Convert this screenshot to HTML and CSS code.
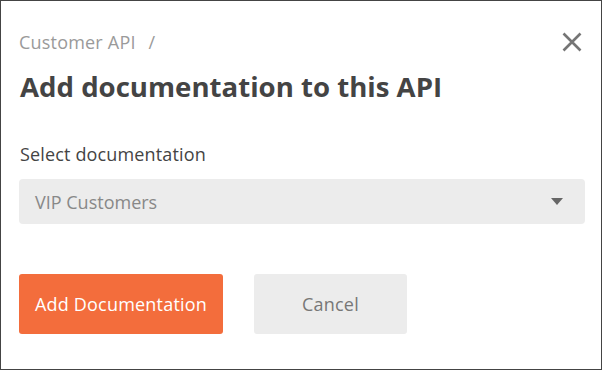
FILE: index.html
```html
<!DOCTYPE html>
<html>
<head>
<meta charset="utf-8">
<link rel="stylesheet" href="styles.css">
</head>
<body>
<div class="dialog">
  <div class="header">
    <div class="crumb">Customer API <span class="sep">/</span></div>
    <button class="close" aria-label="Close">
      <svg width="20" height="20" viewBox="0 0 20 20"><path d="M1.5 1.5 L18.5 18.5 M18.5 1.5 L1.5 18.5" stroke="#757575" stroke-width="2.6" fill="none"/></svg>
    </button>
  </div>
  <h1 class="title">Add documentation to this API</h1>
  <div class="field">
    <label class="label">Select documentation</label>
    <div class="select">
      <span class="value">VIP Customers</span>
      <span class="caret"></span>
    </div>
  </div>
  <div class="actions">
    <button class="btn primary">Add Documentation</button>
    <button class="btn secondary">Cancel</button>
  </div>
</div>
</body>
</html>
```
FILE: styles.css
```css
html, body {
  margin: 0;
  padding: 0;
}
body {
  font-family: "Open Sans", "Noto Sans", sans-serif;
  background: #fff;
}
.dialog {
  box-sizing: border-box;
  width: 602px;
  height: 370px;
  border: 1px solid #444;
  padding: 29px 19px 0 18px;
}
.header {
  display: flex;
  justify-content: space-between;
  align-items: flex-start;
}
.crumb {
  font-size: 18px;
  line-height: 24px;
  color: #9a9a9a;
  letter-spacing: 0.2px;
}
.sep {
  margin-left: 8px;
}
.close {
  border: 0;
  background: none;
  padding: 0;
  margin-top: 2px;
  width: 20px;
  height: 20px;
  cursor: pointer;
}
.close svg {
  display: block;
}
.title {
  margin: 14px 0 0 1px;
  font-size: 27.6px;
  line-height: 36px;
  font-weight: 700;
  color: #444;
}
.field {
  margin-top: 38px;
}
.label {
  display: block;
  margin-left: 1px;
  font-size: 18px;
  line-height: 24px;
  color: #444;
  letter-spacing: 0.15px;
}
.select {
  margin-top: 13px;
  width: 566px;
  height: 45px;
  box-sizing: border-box;
  background: #ececec;
  border-radius: 4px;
  display: flex;
  align-items: center;
  justify-content: space-between;
  padding: 0 22px 0 16px;
}
.value {
  font-size: 18px;
  color: #888;
}
.caret {
  width: 0;
  height: 0;
  border-left: 6px solid transparent;
  border-right: 6px solid transparent;
  border-top: 7px solid #666;
}
.actions {
  margin-top: 50px;
  display: flex;
  gap: 31px;
}
.btn {
  height: 60px;
  border: 0;
  border-radius: 3px;
  font-family: inherit;
  font-size: 18px;
  letter-spacing: 0.2px;
  cursor: pointer;
}
.primary {
  width: 204px;
  background: #f36d3c;
  color: #fff;
}
.secondary {
  width: 153px;
  background: #ececec;
  color: #777;
}
```
